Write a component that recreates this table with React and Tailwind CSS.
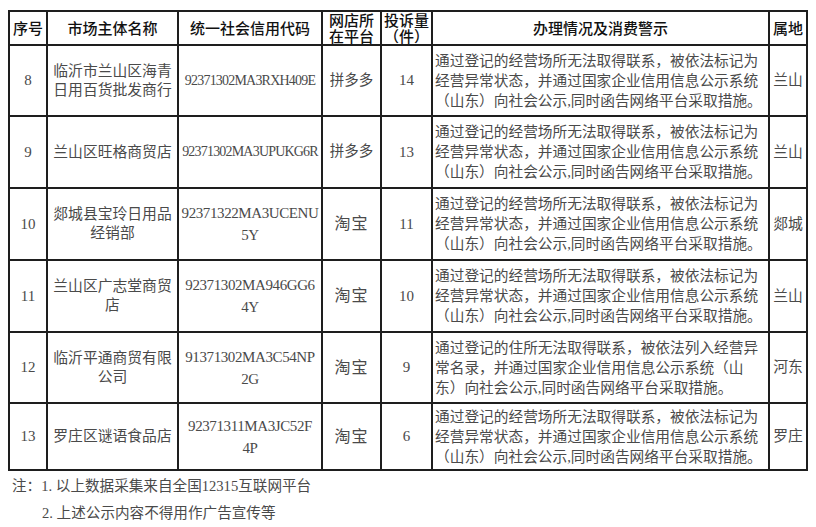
const rows = [
  {
    no: "8",
    name: ["临沂市兰山区海青", "日用百货批发商行"],
    code: ["92371302MA3RXH409E"],
    platform: "拼多多",
    count: "14",
    advice: [
      "通过登记的经营场所无法取得联系，被依法标记为",
      "经营异常状态，并通过国家企业信用信息公示系统",
      "（山东）向社会公示,同时函告网络平台采取措施。",
    ],
    area: "兰山",
  },
  {
    no: "9",
    name: ["兰山区旺格商贸店"],
    code: ["92371302MA3UPUKG6R"],
    platform: "拼多多",
    count: "13",
    advice: [
      "通过登记的经营场所无法取得联系，被依法标记为",
      "经营异常状态，并通过国家企业信用信息公示系统",
      "（山东）向社会公示,同时函告网络平台采取措施。",
    ],
    area: "兰山",
  },
  {
    no: "10",
    name: ["郯城县宝玲日用品", "经销部"],
    code: ["92371322MA3UCENU", "5Y"],
    platform: "淘宝",
    count: "11",
    advice: [
      "通过登记的经营场所无法取得联系，被依法标记为",
      "经营异常状态，并通过国家企业信用信息公示系统",
      "（山东）向社会公示,同时函告网络平台采取措施。",
    ],
    area: "郯城",
  },
  {
    no: "11",
    name: ["兰山区广志堂商贸", "店"],
    code: ["92371302MA946GG6", "4Y"],
    platform: "淘宝",
    count: "10",
    advice: [
      "通过登记的经营场所无法取得联系，被依法标记为",
      "经营异常状态，并通过国家企业信用信息公示系统",
      "（山东）向社会公示,同时函告网络平台采取措施。",
    ],
    area: "兰山",
  },
  {
    no: "12",
    name: ["临沂平通商贸有限", "公司"],
    code: ["91371302MA3C54NP", "2G"],
    platform: "淘宝",
    count: "9",
    advice: [
      "通过登记的住所无法取得联系，被依法列入经营异",
      "常名录，并通过国家企业信用信息公示系统（山",
      "东）向社会公示,同时函告网络平台采取措施。",
    ],
    area: "河东",
  },
  {
    no: "13",
    name: ["罗庄区谜语食品店"],
    code: ["92371311MA3JC52F", "4P"],
    platform: "淘宝",
    count: "6",
    advice: [
      "通过登记的经营场所无法取得联系，被依法标记为",
      "经营异常状态，并通过国家企业信用信息公示系统",
      "（山东）向社会公示,同时函告网络平台采取措施。",
    ],
    area: "罗庄",
  },
];

// fonts
const serif = "font-['Liberation_Serif','Noto_Sans_CJK_SC',serif]";
const head = "bg-white flex items-center justify-center text-center text-[15px] leading-[16px] font-medium text-[#111] font-['Noto_Sans_CJK_SC',sans-serif]";
const cell = `bg-white flex flex-col items-center justify-center text-center text-[#4a4a4a] ${serif}`;

function Row({ r }) {
  const short = r.code.length === 1;
  return (
    <>
      <div className={`${cell} text-[15px]`}>{r.no}</div>
      <div className={`${cell} text-[14.8px] leading-[19px]`}>
        {r.name.map((n) => (
          <div key={n}>{n}</div>
        ))}
      </div>
      <div
        className={`${cell} ${
          short
            ? "text-[14px] tracking-[-0.8px]"
            : "text-[15px] tracking-[-0.4px]"
        } leading-[22px]`}
      >
        {r.code.map((c) => (
          <div key={c}>{c}</div>
        ))}
      </div>
      <div
        className={`${cell} ${
          r.platform === "淘宝" ? "text-[16px] tracking-[1px]" : "text-[14.5px]"
        }`}
      >
        {r.platform}
      </div>
      <div className={`${cell} text-[15px]`}>{r.count}</div>
      <div className={`${cell} !items-start text-left pl-[2px] text-[14.7px] leading-[20px]`}>
        {r.advice.map((a) => (
          <div key={a} className="whitespace-nowrap">
            {a}
          </div>
        ))}
      </div>
      <div className={`${cell} text-[14.8px]`}>{r.area}</div>
    </>
  );
}

export default function App() {
  return (
    <div className="w-[816px] h-[527px] bg-white pt-[10px] pl-[8px] overflow-hidden">
      <div className="grid w-fit grid-cols-[36px_129px_142px_57px_49px_335px_36px] grid-rows-[32px_69px_70px_70px_70px_69px_65px] gap-[2px] p-[2px] bg-[#1e1e1e]">
        <div className={head}>序号</div>
        <div className={head}>市场主体名称</div>
        <div className={head}>统一社会信用代码</div>
        <div className={`${head} flex-col`}>
          <div>网店所</div>
          <div>在平台</div>
        </div>
        <div className={`${head} flex-col`}>
          <div>投诉量</div>
          <div>（件）</div>
        </div>
        <div className={head}>办理情况及消费警示</div>
        <div className={head}>属地</div>
        {rows.map((r) => (
          <Row key={r.no} r={r} />
        ))}
      </div>
      <div className={`mt-[2px] pl-[4px] text-[14.6px] leading-[27px] text-[#4a4a4a] ${serif}`}>
        <div>注：1. 以上数据采集来自全国12315互联网平台</div>
        <div className="pl-[30px]">2. 上述公示内容不得用作广告宣传等</div>
      </div>
    </div>
  );
}
